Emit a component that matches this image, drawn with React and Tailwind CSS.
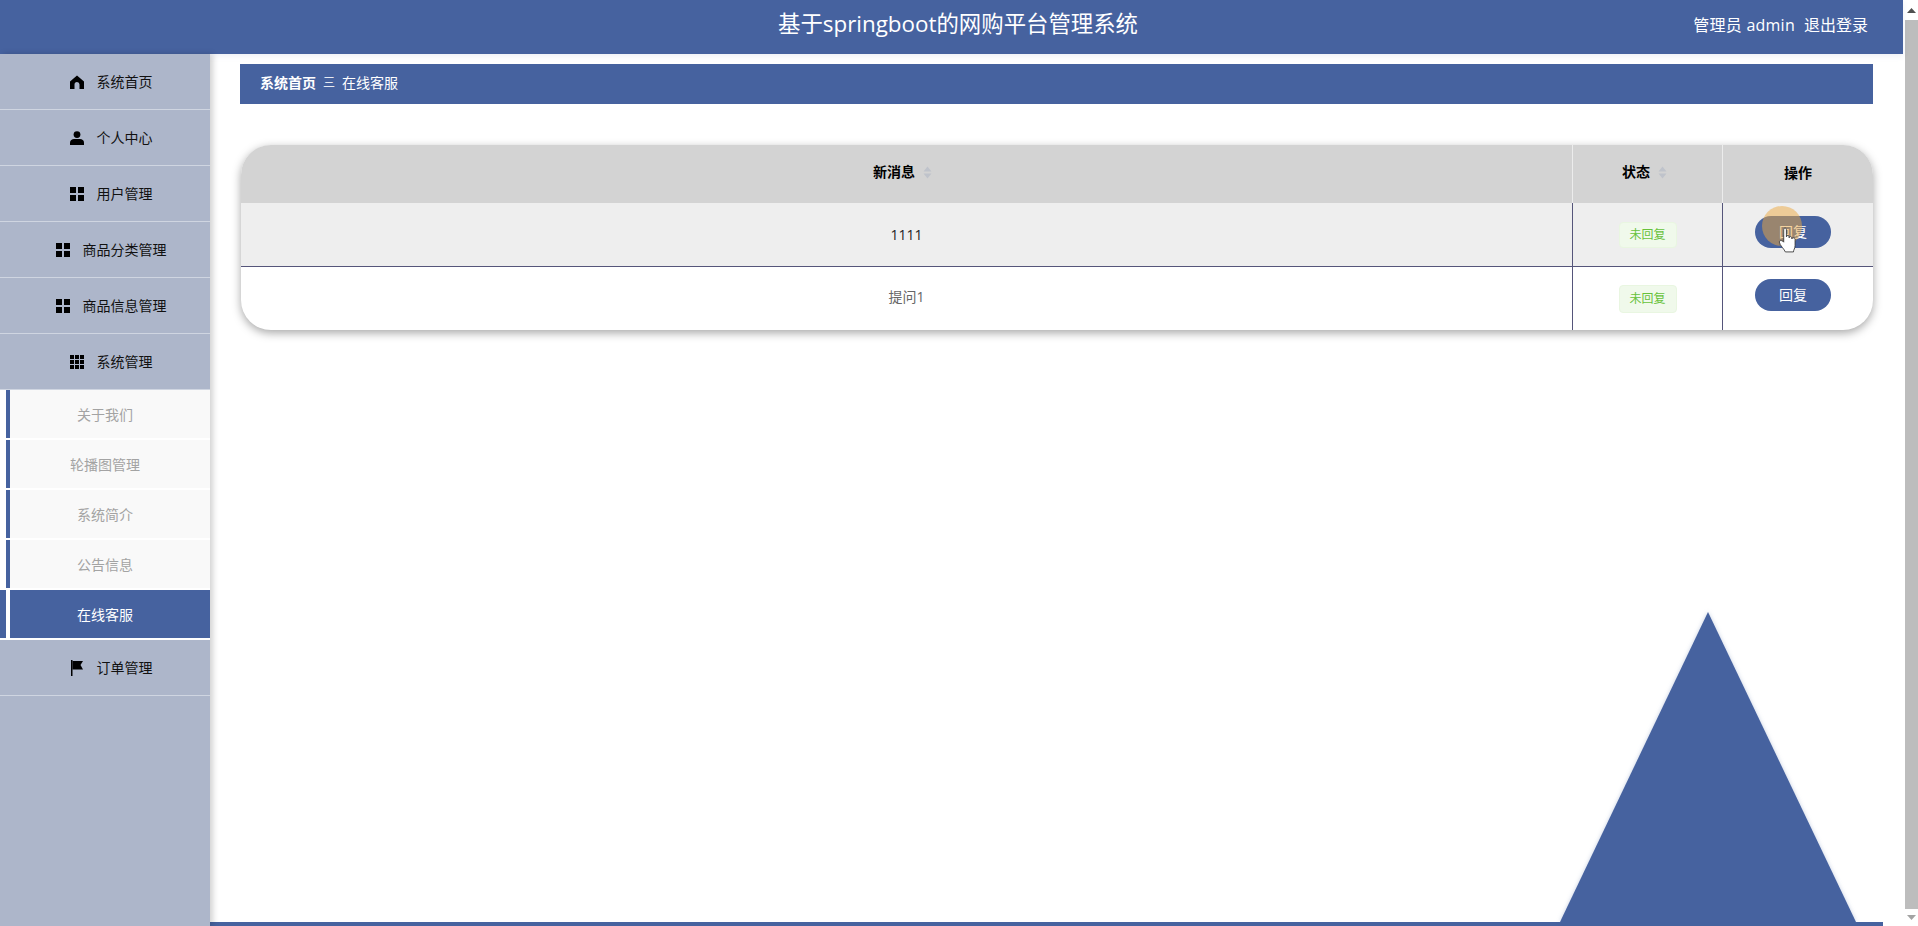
import React from "react";

const menu = [
  { label: "系统首页", icon: "home" },
  { label: "个人中心", icon: "user" },
  { label: "用户管理", icon: "grid" },
  { label: "商品分类管理", icon: "grid" },
  { label: "商品信息管理", icon: "grid" },
  { label: "系统管理", icon: "apps" },
];

const subMenu = ["关于我们", "轮播图管理", "系统简介", "公告信息"];

const MenuIcon = ({ name }) => {
  if (name === "home") {
    return (
      <svg width="14" height="14" viewBox="0 0 14 14" fill="black">
        <path d="M7 0.5 L14 6.5 V14 H9.5 V9.5 A2.5 2.5 0 0 0 4.5 9.5 V14 H0 V6.5 Z" />
      </svg>
    );
  }
  if (name === "user") {
    return (
      <svg width="14" height="14" viewBox="0 0 14 14" fill="black">
        <circle cx="7" cy="3.6" r="3.4" />
        <path d="M0 14 V11.5 C0 9.2 2 8 4 8 H10 C12 8 14 9.2 14 11.5 V14 Z" />
      </svg>
    );
  }
  if (name === "grid") {
    return (
      <svg width="14" height="14" viewBox="0 0 14 14" fill="black">
        <rect x="0" y="0" width="6" height="6" />
        <rect x="8" y="0" width="6" height="6" />
        <rect x="0" y="8" width="6" height="6" />
        <rect x="8" y="8" width="6" height="6" />
      </svg>
    );
  }
  if (name === "apps") {
    return (
      <svg width="14" height="14" viewBox="0 0 14 14" fill="black">
        {[0, 5, 10].map((y) =>
          [0, 5, 10].map((x) => <rect key={`${x}-${y}`} x={x} y={y} width="4" height="4" />)
        )}
      </svg>
    );
  }
  return (
    <svg width="14" height="16" viewBox="0 0 14 16" fill="black">
      <rect x="1" y="0" width="1.5" height="16" />
      <path d="M2.5 1 H13 L10.5 5 L13 9.5 H2.5 Z" />
    </svg>
  );
};

const MenuItem = ({ label, icon }) => (
  <div className="h-14 flex items-center justify-center gap-[13px] pl-3 pt-px border-b border-[#cfd5e1] text-sm text-[#111]">
    <MenuIcon name={icon} />
    <span>{label}</span>
  </div>
);

const SortIcon = () => (
  <svg width="9" height="13" viewBox="0 0 9 13" fill="#bfc3cb">
    <path d="M4.5 0.5 L8.5 5.5 H0.5 Z" />
    <path d="M4.5 12.5 L8.5 7.5 H0.5 Z" />
  </svg>
);

const Tag = ({ tall }) => (
  <span className={`w-[58px] flex items-center justify-center rounded bg-[#f0f9eb] border border-[#e9f6e1] text-xs text-[#67c23a] ${tall ? "h-7" : "h-[26px]"}`}>
    未回复
  </span>
);

const HandCursor = () => (
  <svg className="absolute left-[1778px] top-[227px]" width="19" height="26" viewBox="0 0 17 24" stroke="#333" strokeWidth="0.8" fill="white">
    <path d="M5 13 V2.5 C5 0.5 7.5 0.5 7.5 2.5 V9 C7.5 7.5 10 7.5 10 9 V10 C10 8.5 12.5 8.5 12.5 10 V11 C12.5 9.5 15.5 9.5 15.5 11.5 V17 C15.5 20 14 21 14 23 H6.5 C6 21 1 16.5 1 14 C1 12 3.5 12 5 14 Z" />
  </svg>
);

export default function App() {
  return (
    <div className="relative flex h-[926px] w-full overflow-hidden bg-white font-['Open_Sans','Noto_Sans_CJK_SC',sans-serif]">
      <div className="w-[1903px] flex flex-col">
        {/* Top bar */}
        <header className="relative z-10 h-[54px] shrink-0 bg-[#46629f] text-white flex items-center justify-end pr-[35px] pb-1 shadow-[0_2px_6px_rgba(70,98,159,0.1)]">
          <h1 className="absolute left-[778px] top-2 text-[22.4px] leading-8">
            基于springboot的网购平台管理系统
          </h1>
          <div className="flex gap-[9px] text-base">
            <span className="tracking-[0.25px]">管理员 admin</span>
            <span>退出登录</span>
          </div>
        </header>

        <div className="flex flex-1 min-h-0">
          {/* Sidebar */}
          <aside className="relative z-10 w-[210px] shrink-0 bg-[#adb6ca] shadow-[3px_0_6px_rgba(0,0,0,0.18)]">
            {menu.map((m) => (
              <MenuItem key={m.label} label={m.label} icon={m.icon} />
            ))}
            <div className="bg-white">
              {subMenu.map((s) => (
                <div key={s} className="h-[50px] pl-1.5 pb-0.5">
                  <div className="h-12 border-l-4 border-[#46629f] bg-[#f9f9f9] flex items-center justify-center pr-[10px] pt-px text-sm text-[#a3a3a3]">
                    {s}
                  </div>
                </div>
              ))}
              <div className="h-[50px] pb-0.5">
                <div className="h-12 flex bg-[#46629f]">
                  <div className="w-1.5" />
                  <div className="w-1 bg-white" />
                  <div className="flex-1 flex items-center justify-center pr-[10px] pt-px text-sm text-white">在线客服</div>
                </div>
              </div>
            </div>
            <MenuItem label="订单管理" icon="flag" />
          </aside>

          {/* Main */}
          <main className="relative flex-1 flex flex-col">
            <div className="flex-1 pl-[30px] pr-[30px] pt-2.5">
              <div className="h-10 bg-[#46629f] flex items-center px-5 pb-0.5 text-sm text-white">
                <span className="font-bold">系统首页</span>
                <span className="mx-[7px] text-xs text-[#e6eaf3]">三</span>
                <span>在线客服</span>
              </div>

              <div className="mt-[41px] rounded-[30px] overflow-hidden ml-px bg-white shadow-[0_3px_10px_rgba(0,0,0,0.35)]">
                <div className="flex h-[58px] bg-[#d3d3d3] text-sm font-bold text-black">
                  <div className="w-[1332px] flex items-center justify-center gap-2 pr-2 pb-1 border-r border-[#ececec]">
                    <span>新消息</span>
                    <SortIcon />
                  </div>
                  <div className="w-[150px] flex items-center justify-center gap-2 pr-1.5 pb-1 border-r border-[#ececec]">
                    <span>状态</span>
                    <SortIcon />
                  </div>
                  <div className="flex-1 flex items-center justify-center pb-[3px]">操作</div>
                </div>
                <div className="flex h-[64px] bg-[#eeeeee] border-b border-[#55557a] text-sm text-[#222]">
                  <div className="w-[1332px] flex items-center justify-center border-r border-[#55557a]">1111</div>
                  <div className="w-[150px] flex items-center justify-center border-r border-[#55557a]">
                    <Tag />
                  </div>
                  <div className="flex-1 flex justify-center pt-[13px] -translate-x-[5px]">
                    <button className="h-8 w-[76px] rounded-full bg-[#46629f] text-sm text-white">回复</button>
                  </div>
                </div>
                <div className="flex h-[63px] text-sm text-[#666]">
                  <div className="w-[1332px] flex items-center justify-center pb-1 border-r border-[#55557a]">提问1</div>
                  <div className="w-[150px] flex items-center justify-center border-r border-[#55557a]">
                    <Tag tall />
                  </div>
                  <div className="flex-1 flex justify-center pt-3 -translate-x-[5px]">
                    <button className="h-8 w-[76px] rounded-full bg-[#46629f] text-sm text-white">回复</button>
                  </div>
                </div>
              </div>
            </div>

            <svg className="absolute left-[1350px] bottom-1" width="296" height="310" viewBox="0 0 296 310" style={{ filter: "drop-shadow(0 0 2px rgba(70,98,159,0.3))" }}>
              <path d="M148 0 L296 310 H0 Z" fill="#46629f" />
            </svg>
            <div className="h-1 shrink-0 mr-5 bg-[#46629f]" />
          </main>
        </div>
      </div>

      {/* Window scrollbar */}
      <div className="w-[15px] flex flex-col pl-0.5 bg-white">
        <div className="h-[20px] flex items-center justify-center text-[#505050]">
          <svg width="9" height="5" viewBox="0 0 9 5" fill="currentColor"><path d="M4.5 0 L9 5 H0 Z" /></svg>
        </div>
        <div className="flex-1 bg-[#bdbdbd]" />
        <div className="h-[17px] flex items-center justify-center text-[#a3a3a3]">
          <svg width="9" height="5" viewBox="0 0 9 5" fill="currentColor"><path d="M4.5 5 L9 0 H0 Z" /></svg>
        </div>
      </div>

      {/* Click highlight and pointer */}
      <div className="absolute left-[1762px] top-[206px] w-10 h-10 rounded-full bg-[#eba83f] opacity-50" />
      <HandCursor />
    </div>
  );
}
